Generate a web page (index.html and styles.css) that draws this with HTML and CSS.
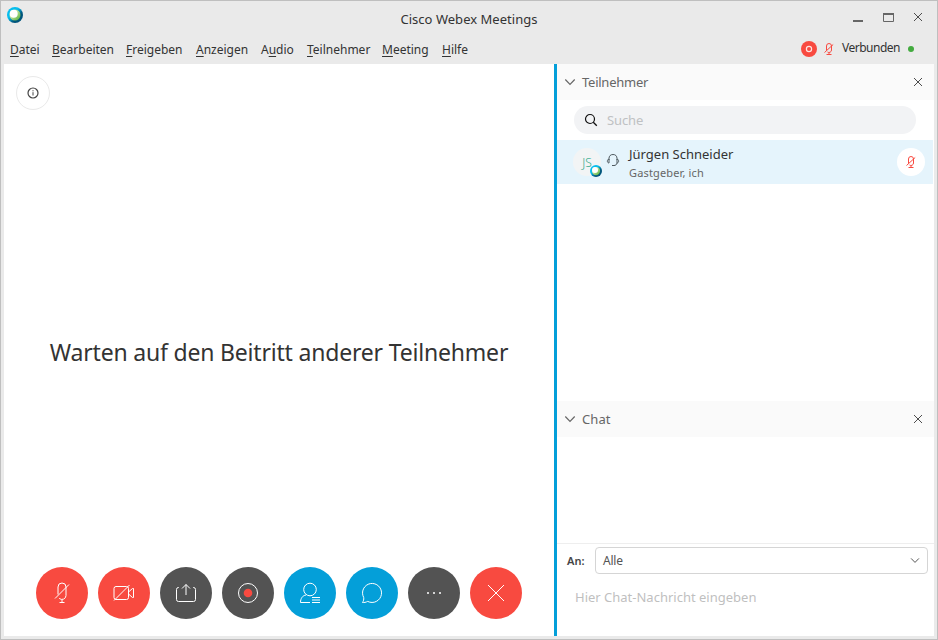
FILE: index.html
```html
<!DOCTYPE html>
<html lang="de">
<head>
<meta charset="utf-8">
<title>Cisco Webex Meetings</title>
<link rel="stylesheet" href="styles.css">
</head>
<body>
<svg class="defs" width="0" height="0" aria-hidden="true">
  <defs>
    <linearGradient id="ring" x1="0" y1="0" x2="1" y2="1"><stop offset=".4" stop-color="#07bdee"/><stop offset=".65" stop-color="#00557c"/></linearGradient>
    <linearGradient id="ball" x1="0" y1="0" x2="1" y2="1"><stop offset=".4" stop-color="#c0e29b"/><stop offset=".9" stop-color="#5cb446"/></linearGradient>
    <symbol id="logo" viewBox="0 0 16 16"><circle cx="8" cy="8" r="8" fill="url(#ring)"/><circle cx="8" cy="8" r="5.500" fill="url(#ball)"/><circle cx="6.700" cy="6.700" r="4" fill="#fff"/></symbol>
    <symbol id="mic" viewBox="0 0 16 22"><path d="M4 12.500V5a4 4 0 0 1 8 0v8.500a4 4 0 0 1-6.800 2.800M8 17.500V20.500M5.500 20.500h5M1 16.500 15 2.500" fill="none" stroke="currentColor"/></symbol>
    <symbol id="mini" viewBox="0 0 10 12"><path d="M2.500 7.500V3a2.500 2.500 0 0 1 5 0v4a2.500 2.500 0 0 1-4 2M5 9.500v2M2.500 11.500h5M.5 9.500l8.700-8" fill="none" stroke="currentColor"/></symbol>
    <symbol id="cross" viewBox="0 0 10 10"><path d="M1 1l8 8M9 1L1 9" fill="none" stroke="currentColor"/></symbol>
    <symbol id="chev" viewBox="0 0 12 8"><path d="M1.300 1.500 6 6.300l4.700-4.800" fill="none" stroke="currentColor" stroke-width="1.200"/></symbol>
  </defs>
</svg>
<div class="window">
  <header class="titlebar">
    <svg class="logo"><use href="#logo"/></svg>
    <h1 class="title">Cisco Webex Meetings</h1>
    <div class="controls">
      <svg width="10" height="12"><path d="M0 11h10" stroke="#666" stroke-width="2"/></svg>
      <svg width="11" height="9"><path d="M.5 0v8.500h10V0" fill="none" stroke="#666"/><path d="M0 1h11" stroke="#666" stroke-width="2"/></svg>
      <svg class="x"><use href="#cross"/></svg>
    </div>
  </header>
  <nav class="menubar">
    <ul class="menu">
      <li><u>D</u>atei</li><li><u>B</u>earbeiten</li><li><u>F</u>reigeben</li><li><u>A</u>nzeigen</li><li>A<u>u</u>dio</li><li><u>T</u>eilnehmer</li><li><u>M</u>eeting</li><li><u>H</u>ilfe</li>
    </ul>
    <div class="status">
      <svg width="16" height="16"><circle cx="8" cy="8" r="8" fill="#f84a40"/><circle cx="8" cy="8" r="2.600" fill="none" stroke="#ffe4e2" stroke-width="1.200"/></svg>
      <svg class="status-mic"><use href="#mini"/></svg>
      <span class="status-text">Verbunden</span>
      <span class="dot"></span>
    </div>
  </nav>
  <main class="content">
    <section class="stage">
      <button class="info"><svg width="12" height="12"><circle cx="6" cy="6" r="5" fill="none" stroke="#444" stroke-width="1.200"/><path d="M6 5.200V8.500M6 3.200V4.300" stroke="#444"/></svg></button>
      <p class="waiting">Warten auf den Beitritt anderer Teilnehmer</p>
      <div class="toolbar">
        <button class="tool red"><svg width="16" height="22"><use href="#mic"/></svg></button>
        <button class="tool red"><svg width="22" height="18" viewBox="0 0 22 18"><path d="M3 2.500h10.500a2 2 0 0 1 2 2v9a2 2 0 0 1-2 2H3a2 2 0 0 1-2-2v-9a2 2 0 0 1 2-2zM1 16.500 16.500 1M15.500 8l4-3.500h1v9h-1l-4-3.500"/></svg></button>
        <button class="tool gray"><svg width="22" height="22" viewBox="0 0 22 22"><path d="M4 5.500H3.500a2 2 0 0 0-2 2v10a2 2 0 0 0 2 2h15a2 2 0 0 0 2-2v-10a2 2 0 0 0-2-2h-.5M11 13V2.500M7 6.500l4-4 4 4"/></svg></button>
        <button class="tool gray"><svg width="22" height="22"><circle cx="11" cy="11" r="9.500"/><circle cx="11" cy="11" r="4.300" fill="#f84a40" stroke="none"/></svg></button>
        <button class="tool blue"><svg width="22" height="22" viewBox="0 0 22 22"><circle cx="11" cy="7.500" r="6.300"/><path d="M11 20.500H1.500c0-4 2-7 5.500-7.500M13 15.500h8M13 18h8M13 20.500h8"/></svg></button>
        <button class="tool blue"><svg width="22" height="22" viewBox="0 0 22 22"><path d="M2.700 15.500a9.500 9.500 0 1 1 4 3.900C5 20.300 3 20.700 1.500 20.500c1-1.500 1.500-3 1.200-5z"/></svg></button>
        <button class="tool gray"><svg width="16" height="4"><path d="M1 2h2M7 2h2M13 2h2" stroke-width="1.600"/></svg></button>
        <button class="tool red"><svg width="18" height="18"><path d="m1 1 16 16M17 1 1 17"/></svg></button>
      </div>
    </section>
    <aside class="side">
      <section class="people">
        <header class="panel-head"><svg class="chev"><use href="#chev"/></svg><h2>Teilnehmer</h2><svg class="x"><use href="#cross"/></svg></header>
        <div class="search"><svg width="14" height="14"><circle cx="6" cy="6" r="4.500" fill="none" stroke="#111" stroke-width="1.200"/><path d="m9.300 9.300 3.500 3.500" stroke="#111" stroke-width="1.300"/></svg><span>Suche</span></div>
        <div class="person">
          <div class="avatar"><span>JS</span><svg class="badge"><use href="#logo"/></svg></div>
          <svg class="headset" width="14" height="14" viewBox="0 0 14 14"><path d="M3 7V5.500C3 3 4.500 1.500 7 1.500S11 3 11 5.500V7M3 6v4c-2 0-2.300-3.500 0-4zM11 6v4c2 0 2.300-3.500 0-4zM11 10c-.3 1.500-1.200 2.500-3 2.500M6 12.500h2.500" fill="none" stroke="#4f5a60"/></svg>
          <div class="who"><div class="name">Jürgen Schneider</div><div class="role">Gastgeber, ich</div></div>
          <div class="muted"><svg width="10" height="12"><use href="#mini"/></svg></div>
        </div>
      </section>
      <section class="chat">
        <header class="panel-head"><svg class="chev"><use href="#chev"/></svg><h2 class="h-chat">Chat</h2><svg class="x"><use href="#cross"/></svg></header>
        <div class="messages"></div>
        <div class="recipient"><span class="to">An:</span><div class="select"><span>Alle</span><svg width="10" height="7"><use href="#chev"/></svg></div></div>
        <div class="compose"><span>Hier Chat-Nachricht eingeben</span></div>
      </section>
    </aside>
  </main>
</div>
</body>
</html>
```
FILE: styles.css
```css
* { box-sizing: border-box; }
body { margin: 0; font-family: "Noto Sans", "Open Sans", sans-serif; color: #333; overflow: hidden; }
svg { display: block; flex: none; }
.defs { position: absolute; }
h1, h2, p, ul { margin: 0; padding: 0; font-weight: 400; }
button { border: 0; padding: 0; font: inherit; }
.window { width: 938px; height: 640px; border: 1px solid #bfbfbf; background: #eaeaea; padding: 0 3px 3px; display: flex; flex-direction: column; }
.titlebar { height: 34px; display: grid; grid-template-columns: 200px 1fr 200px; }
.logo { width: 16px; height: 16px; margin: 6px 0 0 3px; }
.title { font-size: 13px; line-height: 18px; margin-top: 9px; text-align: center; white-space: nowrap; letter-spacing: .03px; }
.controls { display: flex; justify-content: flex-end; gap: 20px; padding: 12px 11px 0 0; }
.controls svg:nth-child(1) { margin-top: -3px; }
.controls svg:nth-child(2) { margin-right: -1px; }
.x { width: 10px; height: 10px; color: #4d4d4d; }
.controls .x { margin-top: -1px; }
.menubar { height: 29px; display: flex; justify-content: space-between; }
.menu { list-style: none; display: grid; grid-template-columns: 42px 74px 70px 65px 46px 75px 60px 30px; padding: 6px 0 0 6px; font-size: 12px; line-height: 18px; white-space: nowrap; }
.menu u { text-underline-offset: 2px; text-decoration-skip-ink: none; }
.status { display: flex; align-items: center; height: 16px; margin: 6px 20px 0 0; }
.status-mic { width: 10px; height: 12px; margin: 0 8px 0 7px; color: #f84a40; }
.status-text { width: 58px; margin-top: -2px; font-size: 12px; line-height: 16px; letter-spacing: -.5px; white-space: nowrap; }
.dot { width: 6px; height: 6px; border-radius: 50%; background: #43ab3f; margin-left: 8px; }
.content { flex: 1; display: flex; background: #fff; min-height: 0; }
.stage { width: 550px; display: flex; flex-direction: column; align-items: center; padding: 12px 0 17px; }
.info { align-self: flex-start; margin-left: 12px; width: 34px; height: 34px; border: 1px solid #e9e9e9; border-radius: 50%; background: #fff; display: grid; place-items: center; }
.waiting { margin-top: 225px; font-size: 23px; line-height: 34px; letter-spacing: -.19px; white-space: nowrap; }
.toolbar { display: flex; gap: 10px; margin-top: auto; }
.tool { width: 52px; height: 52px; border-radius: 50%; display: grid; place-items: center; color: #fff; }
.tool svg { fill: none; stroke: #fff; stroke-width: 1; }
.red { background: #f84a40; }
.gray { background: #535353; }
.blue { background: #049fd9; }
.side { flex: 1; border-left: 3px solid #049fd9; display: flex; flex-direction: column; min-width: 0; }
.people { height: 337px; }
.panel-head { height: 36px; background: #fafafa; display: flex; align-items: center; padding: 0 11px 0 7px; color: #666; }
.panel-head h2 { font-size: 13px; margin-left: 6px; flex: 1; line-height: 18px; letter-spacing: -.25px; }
.panel-head .h-chat { letter-spacing: .1px; }
.chev { width: 12px; height: 8px; }
.search { height: 28px; margin: 6px 18px 0 17px; border-radius: 14px; background: #f2f3f5; display: flex; align-items: center; padding-left: 10px; font-size: 13px; letter-spacing: -.1px; color: #bfc1c3; gap: 9px; }
.person { height: 44px; margin: 6px 1px 0 0; background: #e5f4fc; display: flex; align-items: center; padding: 0 8px 0 16px; }
.avatar { position: relative; width: 28px; height: 28px; border-radius: 50%; background: #f2f4f5; color: #31a98b; font-size: 12px; font-weight: 300; display: grid; place-items: center; }
.badge { position: absolute; right: -1px; bottom: -1px; width: 12px; height: 12px; }
.headset { margin: -5px 0 0 5px; }
.who { margin: 3px 0 0 9px; flex: 1; white-space: nowrap; }
.name { font-size: 13px; line-height: 19px; }
.role { font-size: 11px; line-height: 18px; letter-spacing: .15px; color: #666; }
.muted { width: 28px; height: 28px; border-radius: 50%; background: #fff; color: #f84a40; display: grid; place-items: center; }
.chat { flex: 1; display: flex; flex-direction: column; }
.messages { height: 107px; border-bottom: 1px solid #eee; }
.recipient { display: flex; align-items: center; padding: 3px 6px 0 10px; }
.to { width: 28px; font-size: 11px; font-weight: 600; color: #444; }
.select { flex: 1; height: 27px; border: 1px solid #d5d5d5; border-radius: 4px; display: flex; align-items: center; justify-content: space-between; padding: 0 7px; font-size: 12px; letter-spacing: -.2px; color: #555; }
.compose { padding: 14px 18px; font-size: 13px; line-height: 18px; color: #bfbfbf; }
```
